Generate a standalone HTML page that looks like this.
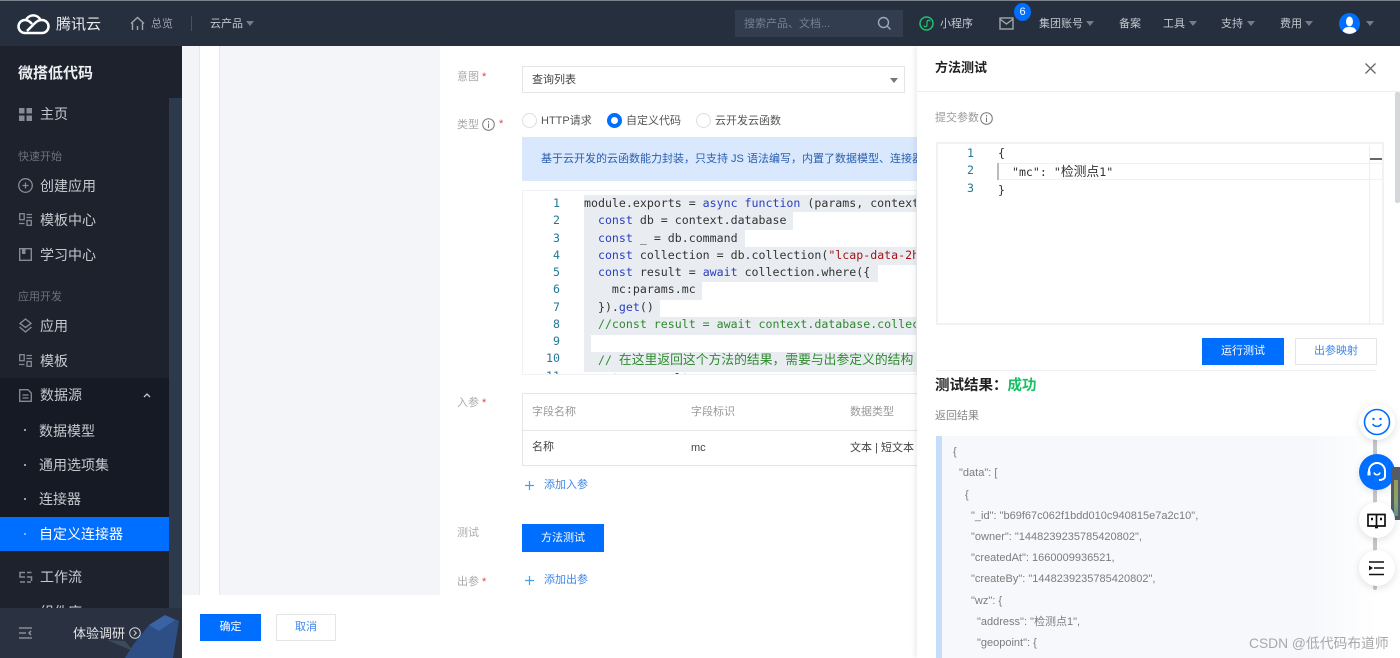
<!DOCTYPE html>
<html lang="zh"><head><meta charset="utf-8"><title>方法测试</title>
<style>
*{box-sizing:border-box}
html,body{margin:0;padding:0;width:1400px;height:658px;overflow:hidden;background:#fff}
body{position:relative;font-family:"Liberation Sans","Noto Sans CJK SC",sans-serif;font-size:12px;color:#333}
.a{position:absolute;white-space:nowrap}
svg{position:absolute;overflow:visible}
.top{color:#c3c7ce;font-size:11px;top:16px;line-height:16px}
.car{position:absolute;width:0;height:0;border-left:4px solid transparent;border-right:4px solid transparent;border-top:5px solid #767c87}
.m{left:40px;font-size:14px;color:#c6c9ce;line-height:20px}
.g{left:18px;font-size:11px;color:#6d717a;line-height:16px}
.s{left:39px;font-size:14px;color:#c6c9ce;line-height:20px}
.d{position:absolute;left:24px;width:2px;height:2px;background:#9a9ea6}
.l{font-size:11px;color:#aaa;left:457px;line-height:16px}
.l i{color:#e54545;font-style:normal;margin-left:3px}
.code{font-family:"DejaVu Sans Mono","Noto Sans CJK SC",monospace;font-size:11.6px;line-height:17.25px;color:#333}
.code b{font-weight:normal;font-size:12.8px;line-height:17.25px;font-family:"Noto Sans CJK SC",sans-serif}
.n{color:#237893;text-align:right;font-family:"DejaVu Sans Mono",monospace;font-size:11.6px;line-height:17.25px}
.hl{position:absolute;background:#e9edf2}
.k{color:#2a3fc0}.c{color:#2e8b2e}.r{color:#a31515}
.j{left:953px;font-size:11px;color:#7c7c7c;line-height:16px}
.fab{position:absolute;left:1359px;width:36px;height:36px;border-radius:50%;background:#fff;box-shadow:0 2px 8px rgba(0,0,0,.12)}
</style></head><body>

<!-- header -->
<div class="a" style="left:0;top:0;width:1400px;height:46px;background:#262f3e;border-top:1px solid #7d838d"></div>
<svg style="left:18px;top:12px" width="31" height="23" viewBox="0 0 31 23" fill="none" stroke="#fff" stroke-width="2.500"><path d="M7 21H24A6.500 6.500 0 0 0 24 8C20 8 18 10 15 13L9 19"/><path d="M7 21A6.500 6.500 0 0 1 7 8C10 8 12 9.500 14 12"/><path d="M8 8A8 8 0 0 1 22.500 8"/></svg>
<div class="a" style="left:56px;top:14px;font-size:15px;line-height:22px;color:#e8eaed">腾讯云</div>
<svg style="left:130px;top:16px" width="15" height="15" viewBox="0 0 15 15" fill="none" stroke="#a0a5ad" stroke-width="1.400"><path d="M1 7.500L7.500 1.500L14 7.500M2.500 7v7M12.500 7v7M7.500 10v4"/></svg>
<div class="a top" style="left:151px;color:#9da2aa">总览</div>
<div class="a" style="left:191px;top:16px;width:1px;height:15px;background:#4a515e"></div>
<div class="a top" style="left:210px">云产品</div><div class="car" style="left:246px;top:21px"></div>

<div class="a" style="left:735px;top:10px;width:168px;height:27px;background:#323e50"></div>
<div class="a" style="left:744px;top:16px;font-size:11px;line-height:16px;color:#76808e">搜索产品、文档...</div>
<svg style="left:877px;top:16px" width="15" height="15" viewBox="0 0 15 15" fill="none" stroke="#a0a7b0" stroke-width="1.400"><circle cx="6.500" cy="6.500" r="5"/><path d="M10 10l3.500 3.500"/></svg>
<svg style="left:919px;top:16px" width="15" height="15" viewBox="0 0 15 15" fill="none" stroke="#1fc46d" stroke-width="1.500"><circle cx="7.500" cy="7.500" r="6.500"/><path d="M5 9.500c0 2 3 1.500 3-.5V6c0-2 3-2.500 3-.5" stroke-width="1.200"/></svg>
<div class="a top" style="left:940px">小程序</div>
<svg style="left:999px;top:17px" width="15" height="13" viewBox="0 0 15 13" fill="none" stroke="#a0a5ad" stroke-width="1.400"><rect x="1" y="1" width="13" height="11"/><path d="M1 2l6.500 5L14 2"/></svg>
<div class="a" style="left:1014px;top:3px;width:17px;height:18px;border-radius:50%;background:#006eff;color:#fff;font-size:11px;line-height:18px;text-align:center">6</div>
<div class="a top" style="left:1039px">集团账号</div><div class="car" style="left:1086px;top:21px"></div>
<div class="a top" style="left:1119px">备案</div>
<div class="a top" style="left:1163px">工具</div><div class="car" style="left:1189px;top:21px"></div>
<div class="a top" style="left:1221px">支持</div><div class="car" style="left:1247px;top:21px"></div>
<div class="a top" style="left:1280px">费用</div><div class="car" style="left:1305px;top:21px"></div>
<svg style="left:1339px;top:13px" width="21" height="21" viewBox="0 0 21 21"><circle cx="10.500" cy="10.500" r="10.500" fill="#006eff"/><ellipse cx="10.500" cy="8.500" rx="3.500" ry="5" fill="#fff"/><path d="M3.500 18c2-4 4-4 7-4s5 0 7 4a10 10 0 0 1-14 0z" fill="#fff"/></svg>
<div class="car" style="left:1366px;top:21px"></div>

<!-- sidebar -->
<div class="a" style="left:0;top:46px;width:182px;height:612px;background:#1e222d"></div>
<div class="a" style="left:169px;top:98px;width:13px;height:510px;background:#2d3a4c"></div>
<div class="a" style="left:0;top:378px;width:169px;height:173px;background:#161a24"></div>
<div class="a" style="left:0;top:517px;width:169px;height:34px;background:#006eff"></div>
<div class="a" style="left:18px;top:63px;font-size:15px;line-height:21px;font-weight:bold;color:#eceef0">微搭低代码</div>

<svg style="left:19px;top:108px" width="13" height="13" viewBox="0 0 13 13" fill="#858a93"><rect width="5.500" height="5.500"/><rect x="7.500" width="5.500" height="5.500"/><rect y="7.500" width="5.500" height="5.500"/><rect x="7.500" y="7.500" width="5.500" height="5.500"/></svg>
<div class="a m" style="top:104px">主页</div>
<div class="a g" style="top:149px">快速开始</div>
<svg style="left:18px;top:178px" width="15" height="15" viewBox="0 0 15 15" fill="none" stroke="#858a93" stroke-width="1.300"><circle cx="7.500" cy="7.500" r="6.800"/><path d="M7.500 4.500v6M4.500 7.500h6"/></svg>
<div class="a m" style="top:176px">创建应用</div>
<svg style="left:19px;top:213px" width="13" height="13" viewBox="0 0 13 13" fill="none" stroke="#858a93" stroke-width="1.300"><rect x=".7" y=".7" width="4.500" height="6"/><path d="M7.500 1.500H13M7.500 4.500H13"/><path d="M0 10.500H5.500"/><rect x="8" y="7.500" width="4.300" height="4.800"/></svg>
<div class="a m" style="top:210px">模板中心</div>
<svg style="left:19px;top:248px" width="13" height="13" viewBox="0 0 13 13" fill="none" stroke="#858a93" stroke-width="1.400"><rect x=".7" y=".7" width="11.600" height="11.600"/><rect x="3" y="1" width="3.500" height="5" fill="#858a93" stroke="none"/></svg>
<div class="a m" style="top:245px">学习中心</div>
<div class="a g" style="top:289px">应用开发</div>
<svg style="left:18px;top:318px" width="15" height="15" viewBox="0 0 15 15" fill="none" stroke="#858a93" stroke-width="1.400"><path d="M7.500 1L13 5.500L7.500 9.500L2 5.500z"/><path d="M1.500 9L7.500 14L13.500 9"/></svg>
<div class="a m" style="top:316px">应用</div>
<svg style="left:19px;top:354px" width="13" height="13" viewBox="0 0 13 13" fill="none" stroke="#858a93" stroke-width="1.300"><rect x=".7" y=".7" width="4.500" height="6"/><path d="M7.500 1.500H13M7.500 4.500H13M0 10.500H5.500"/><rect x="8" y="7.500" width="4.300" height="4.800"/></svg>
<div class="a m" style="top:351px">模板</div>
<svg style="left:19px;top:389px" width="13" height="13" viewBox="0 0 13 13" fill="none" stroke="#858a93" stroke-width="1.300"><path d="M.7.700H9L12.300 4V12.300H.7z"/><path d="M3.500 6h6M3.500 9h6"/></svg>
<div class="a m" style="top:385px">数据源</div>
<svg style="left:143px;top:393px" width="8" height="5" viewBox="0 0 8 5" fill="none" stroke="#c6c9ce" stroke-width="1.300"><path d="M1 4l3-3 3 3"/></svg>
<div class="d" style="top:429px"></div><div class="a s" style="top:421px">数据模型</div>
<div class="d" style="top:464px"></div><div class="a s" style="top:455px">通用选项集</div>
<div class="d" style="top:498px"></div><div class="a s" style="top:489px">连接器</div>
<div class="d" style="top:533px;background:#7fb6ff"></div><div class="a s" style="top:524px;color:#fff">自定义连接器</div>
<svg style="left:19px;top:571px" width="13" height="13" viewBox="0 0 13 13" fill="none" stroke="#858a93" stroke-width="1.500"><path d="M6 1.500H1V6H6M12.500 1.500H8M8 6h4.500V10M1 11H6M8 11h4"/></svg>
<div class="a m" style="top:567px">工作流</div>
<div class="a m" style="top:602px">组件库</div>
<div class="a" style="left:0;top:608px;width:182px;height:50px;background:#2a3140"></div>
<svg style="left:125px;top:615px" width="55" height="43" viewBox="0 0 55 43"><path d="M24 10L40 0L54 6L48 43H0L8 30z" fill="#2e4f85"/><path d="M24 10L40 0L50 5L34 16z" fill="#3a63a5"/><path d="M-18 25L0 26L8 36z" fill="#3d4a5c"/></svg>
<svg style="left:19px;top:627px" width="13" height="12" viewBox="0 0 13 12" fill="none" stroke="#9a9ea6" stroke-width="1.300"><path d="M0 1h13M0 6h7M0 11h13M12 4L10 6l2 2"/></svg>
<div class="a" style="left:73px;top:624px;font-size:13px;line-height:20px;color:#e3e5e8">体验调研</div>
<svg style="left:129px;top:627px" width="12" height="12" viewBox="0 0 12 12" fill="none" stroke="#d0d3d8" stroke-width="1"><circle cx="6" cy="6" r="5.300"/><path d="M4.800 3.500L7.300 6L4.800 8.500"/></svg>

<!-- main -->
<div class="a" style="left:182px;top:46px;width:18px;height:549px;background:#f3f4f7;border-right:1px solid #e6e8ec"></div>
<div class="a" style="left:200px;top:46px;width:19px;height:549px;background:#fff"></div>
<div class="a" style="left:219px;top:46px;width:221px;height:549px;background:#f3f5f9;border-left:1px solid #e6e8ec"></div>

<div class="a l" style="top:69px">意图<i>*</i></div>
<div class="a" style="left:522px;top:66px;width:383px;height:27px;border:1px solid #e3e5e8;background:#fff"></div>
<div class="a" style="left:532px;top:72px;font-size:11px;line-height:16px;color:#444">查询列表</div>
<div class="car" style="left:890px;top:78px;border-top-color:#777"></div>

<div class="a l" style="top:117px">类型</div>
<svg style="left:482px;top:118px" width="13" height="13" viewBox="0 0 13 13" fill="none" stroke="#777" stroke-width="1"><circle cx="6.500" cy="6.500" r="5.800"/><path d="M6.500 5.500v4.500M6.500 3v1.500"/></svg>
<div class="a l" style="left:499px;top:116px;color:#e54545">*</div>
<div class="a" style="left:522px;top:113px;width:15px;height:15px;border-radius:50%;border:1px solid #dcdee2"></div>
<div class="a" style="left:541px;top:113px;font-size:11px;line-height:16px;color:#555">HTTP请求</div>
<div class="a" style="left:607px;top:113px;width:15px;height:15px;border-radius:50%;border:4px solid #006eff"></div>
<div class="a" style="left:626px;top:113px;font-size:11px;line-height:16px;color:#555">自定义代码</div>
<div class="a" style="left:696px;top:113px;width:15px;height:15px;border-radius:50%;border:1px solid #dcdee2"></div>
<div class="a" style="left:715px;top:113px;font-size:11px;line-height:16px;color:#555">云开发云函数</div>

<div class="a" style="left:522px;top:137px;width:395px;height:44px;background:#d9e8fd"></div>
<div class="a" style="left:541px;top:151px;font-size:11px;line-height:16px;color:#2a5fb0;width:376px;overflow:hidden">基于云开发的云函数能力封装，只支持 JS 语法编写，内置了数据模型、连接器</div>

<!-- code editor -->
<div class="a" style="left:522px;top:190px;width:395px;height:185px;background:#fff;border:1px solid #f0f2f4;overflow:hidden">
<div class="hl" style="left:61px;top:4px;width:340px;height:17px"></div>
<div class="hl" style="left:61px;top:21px;width:209px;height:18px"></div>
<div class="hl" style="left:61px;top:39px;width:161px;height:17px"></div>
<div class="hl" style="left:61px;top:56px;width:340px;height:18px"></div>
<div class="hl" style="left:61px;top:74px;width:294px;height:17px"></div>
<div class="hl" style="left:61px;top:91px;width:118px;height:18px"></div>
<div class="hl" style="left:61px;top:109px;width:76px;height:17px"></div>
<div class="hl" style="left:61px;top:126px;width:340px;height:18px"></div>
<div class="hl" style="left:61px;top:144px;width:7px;height:17px"></div>
<div class="hl" style="left:61px;top:161px;width:340px;height:20px"></div>
<div class="a n" style="left:2px;top:4px;width:35px;white-space:pre">1
2
3
4
5
6
7
8
9
10
11</div>
<div class="a code" style="left:61px;top:4px;white-space:pre">module.exports = <span class="k">async function</span> (params, context) {
  <span class="k">const</span> db = context.database
  <span class="k">const</span> _ = db.command
  <span class="k">const</span> collection = db.collection(<span class="r">"lcap-data-2h</span>
  <span class="k">const</span> result = <span class="k">await</span> collection.where({
    mc:params.mc
  }).<span class="k">get</span>()
  <span class="c">//const result = await context.database.collection</span>

  <span class="c">// <b>在这里返回这个方法的结果，需要与出参定义的结构</b></span>
  <span class="k">return</span> result;</div>
</div>

<!-- params -->
<div class="a l" style="top:395px">入参<i>*</i></div>
<div class="a" style="left:522px;top:393px;width:395px;height:73px;border:1px solid #e3e5e8;border-right:0"></div>
<div class="a" style="left:523px;top:430px;width:394px;height:1px;background:#e5e7ea"></div>
<div class="a" style="left:532px;top:404px;font-size:11px;line-height:16px;color:#999">字段名称</div>
<div class="a" style="left:691px;top:404px;font-size:11px;line-height:16px;color:#999">字段标识</div>
<div class="a" style="left:850px;top:404px;font-size:11px;line-height:16px;color:#999">数据类型</div>
<div class="a" style="left:532px;top:439px;font-size:11px;line-height:16px;color:#444">名称</div>
<div class="a" style="left:691px;top:440px;font-size:11px;line-height:16px;color:#444">mc</div>
<div class="a" style="left:850px;top:440px;font-size:11px;line-height:16px;color:#444">文本 | 短文本</div>
<svg style="left:525px;top:481px" width="9" height="9" viewBox="0 0 9 9" stroke="#3ba4f0" stroke-width="1.200"><path d="M4.500 0v9M0 4.500h9"/></svg>
<div class="a" style="left:544px;top:477px;font-size:11px;line-height:16px;color:#3f86e8">添加入参</div>
<div class="a l" style="top:525px">测试</div>
<div class="a" style="left:522px;top:524px;width:82px;height:28px;background:#006eff;color:#fff;font-size:11px;line-height:28px;text-align:center">方法测试</div>
<div class="a l" style="top:574px">出参<i>*</i></div>
<svg style="left:525px;top:576px" width="9" height="9" viewBox="0 0 9 9" stroke="#3ba4f0" stroke-width="1.200"><path d="M4.500 0v9M0 4.500h9"/></svg>
<div class="a" style="left:544px;top:572px;font-size:11px;line-height:16px;color:#3f86e8">添加出参</div>

<!-- bottom bar -->
<div class="a" style="left:182px;top:595px;width:735px;height:63px;background:#fff"></div>
<div class="a" style="left:200px;top:614px;width:61px;height:27px;background:#006eff;color:#fff;font-size:11px;line-height:27px;text-align:center">确定</div>
<div class="a" style="left:276px;top:614px;width:60px;height:27px;background:#fff;border:1px solid #e3e5e8;color:#3f86e8;font-size:11px;line-height:25px;text-align:center">取消</div>

<!-- drawer -->
<div class="a" style="left:917px;top:46px;width:483px;height:612px;background:#fff;box-shadow:-2px 0 5px rgba(0,0,0,.08)"></div>
<div class="a" style="left:935px;top:59px;font-size:13px;line-height:18px;font-weight:bold;color:#222">方法测试</div>
<svg style="left:1365px;top:63px" width="11" height="11" viewBox="0 0 11 11" stroke="#666" stroke-width="1.300"><path d="M.5.500l10 10M10.500.500l-10 10"/></svg>
<div class="a" style="left:917px;top:91px;width:483px;height:1px;background:#eceef0"></div>
<div class="a" style="left:1395px;top:92px;width:5px;height:111px;background:#d5d7da;border-radius:2px"></div>

<div class="a" style="left:935px;top:110px;font-size:11px;line-height:16px;color:#999">提交参数</div>
<svg style="left:980px;top:112px" width="13" height="13" viewBox="0 0 13 13" fill="none" stroke="#777" stroke-width="1"><circle cx="6.500" cy="6.500" r="5.800"/><path d="M6.500 5.500v4.500M6.500 3v1.500"/></svg>
<div class="a" style="left:936px;top:142px;width:448px;height:183px;border:2px solid #f1f2f4"></div>
<div class="a" style="left:1369px;top:145px;width:1px;height:179px;background:#eceef0"></div>
<div class="a" style="left:998px;top:163px;width:385px;height:17px;border:1px solid #f0f1f3"></div>
<div class="a" style="left:997px;top:163px;width:2px;height:17px;background:#bbb"></div>
<div class="a" style="left:1370px;top:158px;width:12px;height:2px;background:#666"></div>
<div class="a n" style="left:945px;top:145px;width:29px;white-space:pre">1
2
3</div>
<div class="a code" style="left:998px;top:145px;white-space:pre">{
  "mc": "<b>检测点</b>1"
}</div>
<div class="a" style="left:1202px;top:338px;width:82px;height:27px;background:#006eff;color:#fff;font-size:11px;line-height:27px;text-align:center">运行测试</div>
<div class="a" style="left:1295px;top:338px;width:82px;height:27px;border:1px solid #e3e5e8;color:#3f86e8;font-size:11px;line-height:25px;text-align:center">出参映射</div>
<div class="a" style="left:936px;top:370px;width:441px;height:1px;background:#f0f1f3"></div>
<div class="a" style="left:935px;top:376px;font-size:14.500px;line-height:20px;font-weight:bold;color:#222">测试结果：<span style="color:#17bf63">成功</span></div>
<div class="a" style="left:935px;top:408px;font-size:11px;line-height:16px;color:#888">返回结果</div>
<div class="a" style="left:936px;top:436px;width:441px;height:222px;background:linear-gradient(90deg,#f6f8fb 85%,#fff);border-left:6px solid #c5dcfb"></div>
<div class="a j" style="top:444px">{</div>
<div class="a j" style="top:465px;left:959px">"data": [</div>
<div class="a j" style="top:487px;left:965px">{</div>
<div class="a j" style="top:508px;left:971px">"_id": "b69f67c062f1bdd010c940815e7a2c10",</div>
<div class="a j" style="top:529px;left:971px">"owner": "1448239235785420802",</div>
<div class="a j" style="top:550px;left:971px">"createdAt": 1660009936521,</div>
<div class="a j" style="top:571px;left:971px">"createBy": "1448239235785420802",</div>
<div class="a j" style="top:593px;left:971px">"wz": {</div>
<div class="a j" style="top:614px;left:977px">"address": "检测点1",</div>
<div class="a j" style="top:635px;left:977px">"geopoint": {</div>

<!-- floating -->
<div class="a" style="left:1373px;top:430px;width:4px;height:160px;background:#c4c7cb;border-radius:3px"></div>
<div class="fab" style="top:404px"></div>
<svg style="left:1364px;top:409px" width="26" height="26" viewBox="0 0 26 26" fill="none" stroke="#006eff" stroke-width="1.600"><circle cx="13" cy="13" r="12.500"/><path d="M9 15.500c2 2.500 6 2.500 8 0" stroke-linecap="round"/><circle cx="9.500" cy="10" r="1.200" fill="#006eff" stroke="none"/><circle cx="16.500" cy="10" r="1.200" fill="#006eff" stroke="none"/></svg>
<div class="fab" style="top:454px;background:#006eff"></div>
<svg style="left:1366px;top:461px" width="22" height="22" viewBox="0 0 22 22" fill="none" stroke="#fff" stroke-width="2"><path d="M3 13V10a8 8 0 0 1 16 0v5c0 3-3 4-6 4"/><path d="M8 11.500c1 3 5 3 6 0" stroke-width="1.600"/><path d="M3 10.500v4" stroke-width="3"/></svg>
<div class="a" style="left:1391px;top:467px;width:9px;height:53px;background:#555b66;border-radius:3px 0 0 3px"></div>
<div class="a" style="left:1394px;top:480px;width:4px;height:36px;background:linear-gradient(#9a9a5a,#8aa26a 60%,#5d9a9a)"></div>
<div class="fab" style="top:502px"></div>
<svg style="left:1367px;top:512px" width="19" height="17" viewBox="0 0 19 17" fill="none" stroke="#111" stroke-width="1.700"><path d="M9.500 2.500H1V14H9.500V2.500H18V14H9.500"/><path d="M4 7h2M13 7h2" stroke-width="2.500"/><path d="M8 15.500h3"/></svg>
<div class="fab" style="top:550px"></div>
<svg style="left:1369px;top:561px" width="16" height="15" viewBox="0 0 16 15" stroke="#111" stroke-width="1.600"><path d="M0 1h15M5 7h10M0 13.500h15"/><path d="M0 4.500L4 7L0 9.500z" fill="#111" stroke="none"/></svg>
<div class="a" style="left:1249px;top:635px;font-size:13.800px;line-height:18px;color:#a8a8a8">CSDN @低代码布道师</div>
</body></html>
